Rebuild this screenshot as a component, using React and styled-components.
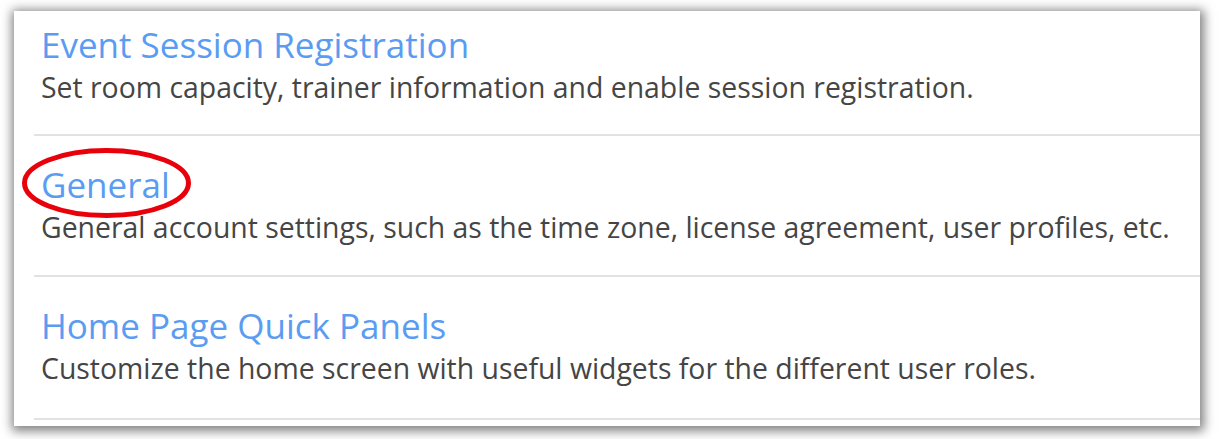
import styled, { createGlobalStyle } from 'styled-components'

const settings = [
  { id: 1, title: 'Event Session Registration', text: 'Set room capacity, trainer information and enable session registration.' },
  { id: 2, title: 'General', text: 'General account settings, such as the time zone, license agreement, user profiles, etc.', circled: true },
  { id: 3, title: 'Home Page Quick Panels', text: 'Customize the home screen with useful widgets for the different user roles.' }
]

const Global = createGlobalStyle`
  html, body {
    margin: 0;
    background: #ffffff;
  }
`

const Page = styled.div`
  width: 1219px;
  height: 439px;
  padding: 11px 19px 13px 14px;
  box-sizing: border-box;
  overflow: hidden;
`

const Card = styled.div`
  height: 100%;
  background: #ffffff;
  box-shadow: 1px 2px 10px 3px rgba(0, 0, 0, 0.5);
  padding-left: 20px;
  box-sizing: border-box;
  overflow: hidden;
`

const Row = styled.div`
  height: 141px;
  border-bottom: 2px solid #e2e2e2;
  box-sizing: border-box;
  padding: 27px 0 0 7px;
  font-family: "Open Sans", "Liberation Sans", sans-serif;

  &:first-child {
    height: 125px;
    padding-top: 12px;
  }

  &:last-child {
    height: 143px;
  }
`

const Title = styled.a`
  position: relative;
  display: inline-block;
  color: #5a9cf2;
  font-size: 35px;
  line-height: 44px;
  text-decoration: none;
`

const Text = styled.p`
  margin: 3px 0 0;
  color: #454545;
  font-size: 28.4px;
  line-height: 34px;
  white-space: nowrap;
`

const Ring = styled.svg`
  position: absolute;
  left: -19px;
  top: -15px;
  width: 169px;
  height: 70px;
  overflow: visible;
`

function App() {
  return (
    <>
      <Global />
      <Page>
        <Card>
          {settings.map(item => (
            <Row key={item.id}>
              <Title href="#">
                {item.title}
                {item.circled && (
                  <Ring viewBox="0 0 169 70">
                    <ellipse cx="84.5" cy="35" rx="82" ry="32.5" fill="none" stroke="#e8000b" strokeWidth="5" />
                  </Ring>
                )}
              </Title>
              <Text>{item.text}</Text>
            </Row>
          ))}
        </Card>
      </Page>
    </>
  )
}

export default App
